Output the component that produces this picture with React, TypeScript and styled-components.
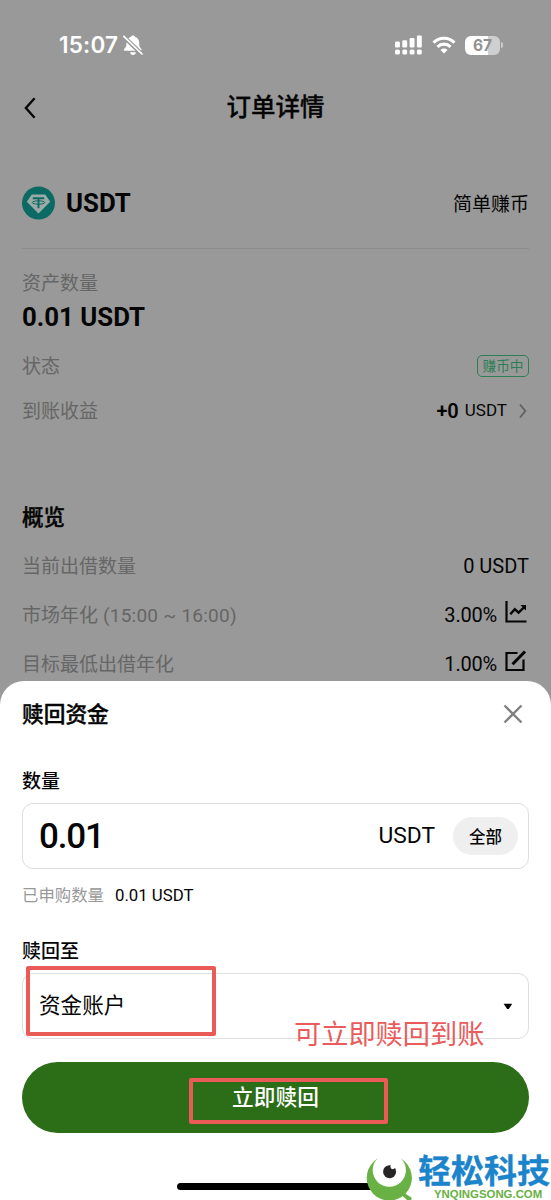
import React from "react";
import styled, { createGlobalStyle } from "styled-components";

const GlobalStyle = createGlobalStyle`
  *, *::before, *::after { box-sizing: border-box; }
  body {
    margin: 0;
    background: #999;
    font-family: Roboto, "Noto Sans CJK SC", sans-serif;
    color: #050505;
  }
  button { font-family: inherit; color: inherit; border: 0; padding: 0; background: none; }
  svg { display: block; flex: none; }
`;

const Screen = styled.main`
  position: relative;
  width: 551px;
  height: 1200px;
  overflow: hidden;
  background: #999;
`;

const StatusBar = styled.header`
  display: flex;
  align-items: center;
  justify-content: space-between;
  height: 90px;
  padding: 0 48px 0 59px;
  color: #fff;
`;

const Cluster = styled.div<{ $gap: number; $inset?: number }>`
  display: flex;
  align-items: center;
  gap: ${(p) => p.$gap}px;
  padding-right: ${(p) => p.$inset ?? 0}px;
`;

const Clock = styled.span`
  font: 600 22.5px/30px Inter, sans-serif;
  letter-spacing: 0.2px;
`;

const NavBar = styled.nav`
  display: grid;
  grid-template-columns: 60px 1fr 60px;
  align-items: center;
  height: 36px;
  padding: 0 22px;
`;

const NavTitle = styled.h1`
  margin: 0;
  text-align: center;
  font-size: 24.5px;
  line-height: 36px;
  font-weight: 500;
  -webkit-text-stroke: 0.3px currentColor;
`;

const Details = styled.section`
  padding: 0 22px;
`;

const AssetHeader = styled.div`
  display: flex;
  align-items: center;
  justify-content: space-between;
  height: 123px;
  padding-top: 32px;
  border-bottom: 1px solid #8c8c8c;
`;

const Text = styled.span<{ $size: number; $weight?: number; $color?: string; $spacing?: number }>`
  font-size: ${(p) => p.$size}px;
  font-weight: ${(p) => p.$weight ?? 400};
  color: ${(p) => p.$color ?? "inherit"};
  letter-spacing: ${(p) => p.$spacing ?? 0}px;
  line-height: 1.4;
  white-space: pre;
`;

/* Chinese glyphs sit high in their line box, so the label is lowered to centre optically. */
const Label = styled(Text)`
  padding-top: 4px;
`;

const AmountBlock = styled.div`
  display: flex;
  flex-direction: column;
  justify-content: space-between;
  height: 68px;
  margin: 18px 0 8px;
`;

const Row = styled.div<{ $height: number }>`
  display: flex;
  align-items: center;
  justify-content: space-between;
  height: ${(p) => p.$height}px;
`;

const Tag = styled.span`
  display: flex;
  align-items: center;
  justify-content: center;
  width: 52px;
  height: 22px;
  border: 1.5px solid #2c7f55;
  border-radius: 5px;
  color: #2c7f55;
  font-size: 13.7px;
  line-height: 18px;
`;

const SectionTitle = styled.h2`
  margin: 69px 0 7px;
  font-size: 21.5px;
  line-height: 32px;
  font-weight: 500;
  -webkit-text-stroke: 0.4px currentColor;
`;

const RaisedIcon = styled.span`
  padding-bottom: 5px;
`;

const Sheet = styled.section`
  position: absolute;
  inset: 681px 0 0;
  display: flex;
  flex-direction: column;
  padding: 0 22px;
  border-radius: 24px 24px 0 0;
  background: #fff;
`;

const SheetHeader = styled.div`
  display: flex;
  align-items: center;
  justify-content: space-between;
  height: 65px;
  padding-right: 6px;
`;

const SheetTitle = styled.h2`
  margin: 0;
  padding-top: 3px;
  font-size: 21.7px;
  line-height: 30px;
  font-weight: 500;
  -webkit-text-stroke: 0.4px currentColor;
`;

const FieldLabel = styled.label<{ $top: number }>`
  margin-top: ${(p) => p.$top}px;
  height: 28px;
  font-size: 19px;
  line-height: 28px;
  font-weight: 500;
`;

const Field = styled.div<{ $top: number }>`
  display: flex;
  align-items: center;
  justify-content: space-between;
  height: 66px;
  margin-top: ${(p) => p.$top}px;
  padding: 0 10px 0 16px;
  border: 1.5px solid #dedede;
  border-radius: 11px;
`;

const AllButton = styled.button`
  width: 65px;
  height: 38px;
  border-radius: 19px;
  background: #efefef;
  font-size: 16.5px;
  font-weight: 500;
`;

const Hint = styled.div`
  display: flex;
  align-items: center;
  gap: 11px;
  height: 26px;
  margin-top: 14px;
`;

const SubmitButton = styled.button`
  height: 71px;
  flex: none;
  margin-top: 23px;
  padding-bottom: 4px;
  border-radius: 36px;
  background: #2c6d18;
  color: #fff;
  font-size: 21.7px;
  font-weight: 500;
`;

const HomeIndicator = styled.div`
  width: 198px;
  height: 7px;
  margin: 50px auto 0;
  border-radius: 4px;
  background: #000;
`;

const Highlight = styled.div<{ $x: number; $y: number; $w: number; $h: number }>`
  position: absolute;
  left: ${(p) => p.$x}px;
  top: ${(p) => p.$y}px;
  width: ${(p) => p.$w}px;
  height: ${(p) => p.$h}px;
  border: 4.5px solid #ea5b58;
  border-radius: 2px;
`;

const Note = styled.div`
  position: absolute;
  left: 294px;
  top: 1015px;
  font-size: 27.2px;
  line-height: 40px;
  color: #ea5b5b;
  white-space: nowrap;
`;

const Brand = styled.div`
  position: absolute;
  left: 366px;
  top: 1155px;
  display: flex;
  gap: 5px;
  height: 45px;
`;

const BrandText = styled.div`
  display: flex;
  flex-direction: column;
  width: 134px;
`;

const BrandName = styled.span`
  font-size: 33px;
  line-height: 33px;
  font-weight: 700;
  color: #1c84ca;
  white-space: nowrap;
  -webkit-text-stroke: 0.3px currentColor;
`;

const BrandUrl = styled.span`
  margin-left: 16px;
  font: 700 11.4px/12px "Liberation Sans", sans-serif;
  color: #68b043;
`;

const MutedBell = () => (
  <svg width="20" height="21" viewBox="0 0 20 21">
    <path d="M10 .4c1 0 1.7.6 2 1.4 2.700 1 4.200 3.100 4.200 6.100 0 3.400.7 4.500 2 5.800.8.8.6 2-.7 2H2c-1.300 0-1.500-1.200-.7-2 1.300-1.300 2.200-2.400 2.200-5.800 0-3 1.800-5.100 4.500-6.100.3-.8 1-1.400 2-1.400z" fill="#fff" />
    <path d="M7 17.300h6c-.3 1.600-1.500 2.600-3 2.600s-2.700-1-3-2.600z" fill="#fff" />
    <path d="M.2 1.200 19.500 19.800" stroke="#999" strokeWidth="4.200" />
    <path d="M.8 1.400 19 19" stroke="#fff" strokeWidth="1.700" strokeLinecap="round" />
  </svg>
);

const Signal = () => (
  <svg width="27" height="20" viewBox="0 0 27 20" fill="#fff">
    {[6.5, 5.3, 3, 0.5].map((y, i) => (
      <React.Fragment key={i}>
        <rect x={i * 7.3} y={y} width="4.900" height={12.5 - y} rx="1.300" />
        <rect x={i * 7.3} y="14.400" width="4.900" height="5" rx="1.500" />
      </React.Fragment>
    ))}
  </svg>
);

const Wifi = () => (
  <svg width="24" height="18" viewBox="0 0 24 18" fill="none" stroke="#fff" strokeWidth="3.100">
    <path d="M1.500 6.600a15 15 0 0 1 21 0" />
    <path d="M5.500 10.800a9.300 9.300 0 0 1 13 0" />
    <path d="M8.500 14a5 5 0 0 1 7 0L12 17.500z" fill="#fff" stroke="none" />
  </svg>
);

const BatteryShell = styled.div`
  display: flex;
  align-items: center;
  gap: 1px;
  &::after {
    content: "";
    width: 2px;
    height: 6px;
    border-radius: 0 3px 3px 0;
    background: #ccc;
  }
`;

const BatteryLevel = styled.div`
  width: 35px;
  height: 19px;
  border-radius: 6px;
  background: linear-gradient(90deg, #fff 67%, #cfcfcf 67%);
  color: #919191;
  font: 700 15.5px/19px Inter, sans-serif;
  text-align: center;
`;

const BackIcon = () => (
  <svg width="16" height="24" viewBox="0 0 16 24">
    <path d="M12.600 2.300 3.900 12l8.700 9.700" fill="none" stroke="#080808" strokeWidth="2.400" />
  </svg>
);

const TetherIcon = () => (
  <svg width="33" height="34" viewBox="0 0 33 34">
    <circle cx="16.500" cy="17" r="16.500" fill="#0c6a64" />
    <path d="M9.800 8.500h13.400l5 7.300L16.500 27.500 4.800 15.800z" fill="#9ba9a7" />
    <path d="M10.800 12.200h11.400M16.500 12.200v10" fill="none" stroke="#0c6a64" strokeWidth="1.900" />
    <ellipse cx="16.500" cy="16.500" rx="6.200" ry="1.700" fill="none" stroke="#0c6a64" strokeWidth="1" />
  </svg>
);

const ChevronIcon = () => (
  <svg width="8" height="16" viewBox="0 0 8 16">
    <path d="m1 1.500 5.300 6.500L1 14.500" fill="none" stroke="#626262" strokeWidth="1.900" />
  </svg>
);

const ChartIcon = () => (
  <svg width="22" height="22" viewBox="0 0 22 22" fill="none" stroke="#050505" strokeWidth="2.200">
    <path d="M1.500 0v20.500H21.500" />
    <path d="m5.300 13.300 4.500-5.100 3.800 3.500 5.700-5.500" strokeWidth="2.400" />
    <path d="M15.500 4H21v5.500z" fill="#050505" stroke="none" />
  </svg>
);

const EditIcon = () => (
  <svg width="22" height="22" viewBox="0 0 22 22" fill="none" stroke="#050505" strokeWidth="2.200">
    <path d="M12.500 3h-11v17h17V9.500" />
    <path d="M7.500 14.300 20 1.500" strokeWidth="3" />
  </svg>
);

const CloseIcon = () => (
  <svg width="20" height="20" viewBox="0 0 20 20">
    <path d="m1.500 1.500 17 17m0-17-17 17" stroke="#808080" strokeWidth="2.400" />
  </svg>
);

const CaretIcon = () => (
  <svg width="10" height="7" viewBox="0 0 10 7">
    <path d="M.6.800h8.600L5.700 6H4.100z" fill="#000" />
  </svg>
);

const EyeLogo = () => (
  <svg width="47" height="45" viewBox="0 0 47 45">
    <path d="M36 40.500 43.500 33.500 38.500 38l6.800 4.500c.8 1 .4 2.500-.8 2.500H41z" fill="#69b144" />
    <circle cx="23.300" cy="22.900" r="22.600" fill="#69b144" />
    <circle cx="23.300" cy="15.200" r="16.600" fill="#fff" />
    <circle cx="23.600" cy="16.700" r="6.500" fill="#272425" />
    <circle cx="26.800" cy="11.800" r="2.400" fill="#fff" />
  </svg>
);

const muted = "#666";

export default function App() {
  return (
    <Screen>
      <GlobalStyle />
      <StatusBar>
        <Cluster $gap={5}>
          <Clock>15:07</Clock>
          <MutedBell />
        </Cluster>
        <Cluster $gap={9.5}>
          <Signal />
          <Wifi />
          <BatteryShell><BatteryLevel>67</BatteryLevel></BatteryShell>
        </Cluster>
      </StatusBar>
      <NavBar>
        <BackIcon />
        <NavTitle>订单详情</NavTitle>
      </NavBar>

      <Details>
        <AssetHeader>
          <Cluster $gap={11}>
            <TetherIcon />
            <Text $size={25.8} $weight={700}>USDT</Text>
          </Cluster>
          <Label $size={19}>简单赚币</Label>
        </AssetHeader>
        <AmountBlock>
          <Label $size={19} $color={muted}>资产数量</Label>
          <Text $size={25.8} $weight={700}>0.01 USDT</Text>
        </AmountBlock>
        <Row $height={45}>
          <Label $size={19} $color={muted}>状态</Label>
          <Tag>赚币中</Tag>
        </Row>
        <Row $height={45}>
          <Label $size={19} $color={muted}>到账收益</Label>
          <Cluster $gap={12} $inset={2}>
            <Cluster $gap={6}>
              <Text $size={20} $weight={600}>+0</Text>
              <Text $size={17}>USDT</Text>
            </Cluster>
            <ChevronIcon />
          </Cluster>
        </Row>
        <SectionTitle>概览</SectionTitle>
        <Row $height={49}>
          <Label $size={19} $color={muted}>当前出借数量</Label>
          <Text $size={20}>0 USDT</Text>
        </Row>
        <Row $height={49}>
          <Label $size={19} $color={muted}>
            市场年化<Text as="span" $size={19} $spacing={0.25}>{" (15:00 ~ 16:00)"}</Text>
          </Label>
          <Cluster $gap={8} $inset={2}>
            <Text $size={20} $spacing={-0.2}>3.00%</Text>
            <RaisedIcon><ChartIcon /></RaisedIcon>
          </Cluster>
        </Row>
        <Row $height={49}>
          <Label $size={19} $color={muted}>目标最低出借年化</Label>
          <Cluster $gap={8} $inset={2}>
            <Text $size={20} $spacing={-0.2}>1.00%</Text>
            <RaisedIcon><EditIcon /></RaisedIcon>
          </Cluster>
        </Row>
      </Details>

      <Sheet>
        <SheetHeader>
          <SheetTitle>赎回资金</SheetTitle>
          <CloseIcon />
        </SheetHeader>
        <FieldLabel $top={22}>数量</FieldLabel>
        <Field $top={7}>
          <Text $size={35} $weight={500} $spacing={-1.2}>0.01</Text>
          <Cluster $gap={18}>
            <Text $size={22.8}>USDT</Text>
            <AllButton>全部</AllButton>
          </Cluster>
        </Field>
        <Hint>
          <Text $size={16.4} $color="#999">已申购数量</Text>
          <Text $size={16.8}>0.01 USDT</Text>
        </Hint>
        <FieldLabel $top={29}>赎回至</FieldLabel>
        <Field $top={7}>
          <Text $size={21.6}>资金账户</Text>
          <Cluster $gap={0} $inset={5}><CaretIcon /></Cluster>
        </Field>
        <SubmitButton>立即赎回</SubmitButton>
        <HomeIndicator />
      </Sheet>

      <Highlight $x={26} $y={966} $w={190} $h={70} />
      <Highlight $x={189} $y={1078} $w={199} $h={46} />
      <Note>可立即赎回到账</Note>
      <Brand>
        <EyeLogo />
        <BrandText>
          <BrandName>轻松科技</BrandName>
          <BrandUrl>YNQINGSONG.COM</BrandUrl>
        </BrandText>
      </Brand>
    </Screen>
  );
}
